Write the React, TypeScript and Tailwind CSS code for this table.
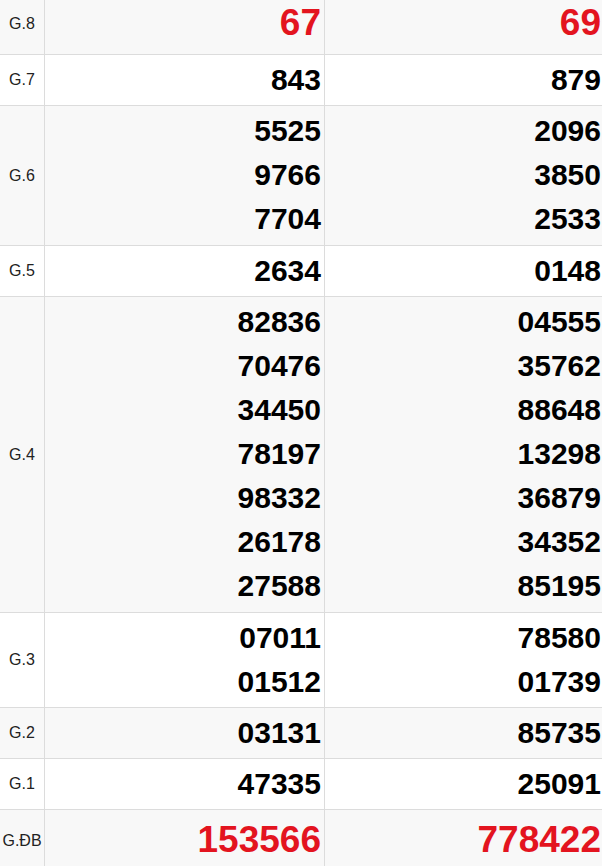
import React from "react";

type Row = { label: string; a: string[]; b: string[]; red?: boolean; tall?: boolean };

const rows: Row[] = [
  { label: "G.8", a: ["67"], b: ["69"], red: true },
  { label: "G.7", a: ["843"], b: ["879"] },
  { label: "G.6", a: ["5525", "9766", "7704"], b: ["2096", "3850", "2533"], tall: true },
  { label: "G.5", a: ["2634"], b: ["0148"] },
  {
    label: "G.4",
    a: ["82836", "70476", "34450", "78197", "98332", "26178", "27588"],
    b: ["04555", "35762", "88648", "13298", "36879", "34352", "85195"],
    tall: true,
  },
  { label: "G.3", a: ["07011", "01512"], b: ["78580", "01739"] },
  { label: "G.2", a: ["03131"], b: ["85735"] },
  { label: "G.1", a: ["47335"], b: ["25091"] },
  { label: "G.ĐB", a: ["153566"], b: ["778422"], red: true },
];

function Cell({ nums, red, tall }: { nums: string[]; red?: boolean; tall?: boolean }) {
  const pad = red ? "pt-[2px] pb-[4px]" : tall ? "pt-[3px] pb-[4px]" : "py-[3px]";
  return (
    <div className={`w-[280px] shrink-0 border-r border-[#dcdcdc] pr-[3px] text-right ${pad}`}>
      {nums.map((n, i) => (
        <div
          key={i}
          className={
            red
              ? "font-bold leading-[55px] text-[37px] text-[#e3141f]"
              : "font-bold leading-[44px] text-[30px] text-black"
          }
        >
          {n}
        </div>
      ))}
    </div>
  );
}

export default function App() {
  return (
    <div
      className="w-[602px] h-[866px] overflow-hidden bg-white"
      style={{ fontFamily: '"Liberation Sans", Arial, sans-serif' }}
    >
      <div className="w-[605px] -mt-[7px]">
        {rows.map((r, i) => (
          <div
            key={r.label}
            className={`flex border-b border-[#dcdcdc] ${i % 2 === 0 ? "bg-[#f8f8f8]" : "bg-white"}`}
          >
            <div className="w-[45px] shrink-0 border-r border-[#dcdcdc] flex items-center justify-center text-[16px] text-[#222]">
              {r.label}
            </div>
            <Cell nums={r.a} red={r.red} tall={r.tall} />
            <Cell nums={r.b} red={r.red} tall={r.tall} />
          </div>
        ))}
      </div>
    </div>
  );
}
